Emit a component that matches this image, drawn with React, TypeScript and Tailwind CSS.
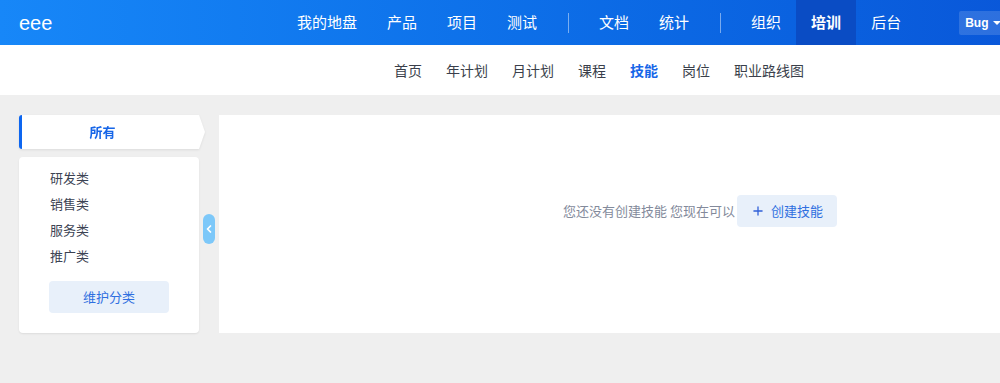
import { ChevronLeft, Plus } from 'lucide-react'

const NAV_LEFT = ['我的地盘', '产品', '项目', '测试']
const NAV_MID = ['文档', '统计']
const NAV_RIGHT = ['组织', '培训', '后台']
const SUB_NAV = ['首页', '年计划', '月计划', '课程', '技能', '岗位', '职业路线图']
const CATEGORIES = ['研发类', '销售类', '服务类', '推广类']

const font = { fontFamily: '"Noto Sans CJK SC", "Noto Sans", sans-serif' }

export default function App() {
  return (
    <div className="w-[1000px] h-[383px] overflow-hidden bg-[#efefef]" style={font}>
      <div className="w-[1180px]">
        {/* 顶部导航 */}
        <header className="h-[45px] flex items-center bg-gradient-to-r from-[#1787f8] to-[#0a4fd4] text-white">
          <div className="w-[282px] shrink-0 pl-[19px] text-[20px] leading-none" style={{ fontFamily: '"Liberation Sans", Arial, sans-serif' }}>
            eee
          </div>
          <nav className="flex items-center h-full text-[15px]">
            {NAV_LEFT.map((n) => (
              <NavItem key={n} label={n} />
            ))}
            <Divider />
            {NAV_MID.map((n) => (
              <NavItem key={n} label={n} />
            ))}
            <Divider />
            {NAV_RIGHT.map((n) => (
              <NavItem key={n} label={n} active={n === '培训'} />
            ))}
          </nav>
          <div
            className="ml-[43px] h-[24px] w-[52px] shrink-0 rounded-[2px] bg-white/15 flex items-center gap-[5px] pl-[6px] text-[12px] font-bold"
            style={{ fontFamily: '"Liberation Sans", Arial, sans-serif' }}
          >
            Bug
            <span className="w-0 h-0 border-x-[4px] border-x-transparent border-t-[4px] border-t-white" />
          </div>
        </header>

        {/* 二级导航 */}
        <div className="h-[50px] bg-white flex items-center pl-[394px] gap-6 text-[14px] text-[#3a3f4b]">
          {SUB_NAV.map((s) => (
            <span key={s} className={s === '技能' ? 'text-[#1766e8] font-bold' : ''}>
              {s}
            </span>
          ))}
        </div>

        {/* 主体 */}
        <div className="relative flex pt-5 pl-[19px] gap-5">
          <aside className="w-[180px] shrink-0 flex flex-col gap-2">
            <div className="relative w-[186px] h-[34px] drop-shadow-[0_1px_1px_rgba(0,0,0,0.08)]">
              <div
                className="h-full bg-white border-l-[3px] border-[#0d66f0] rounded-l-[3px] flex items-center justify-center pr-[22px] text-[13px] font-bold text-[#1766e8]"
                style={{ clipPath: 'polygon(0 0, calc(100% - 6px) 0, 100% 50%, calc(100% - 6px) 100%, 0 100%)' }}
              >
                所有
              </div>
            </div>
            <div className="h-[176px] bg-white rounded-[4px] shadow-[0_1px_2px_rgba(0,0,0,0.08)] pt-[8px] pl-[30px] pr-[30px]">
              {CATEGORIES.map((c) => (
                <div key={c} className="h-[26px] flex items-center pl-px text-[13px] text-[#3c4353]">
                  {c}
                </div>
              ))}
              <button className="mt-[12px] w-[120px] h-[32px] rounded-[4px] bg-[#e8f0fa] text-[13px] text-[#2f6fe0]">
                维护分类
              </button>
            </div>
          </aside>

          {/* 收起按钮 */}
          <div className="absolute left-[203px] top-[119px] w-[12px] h-[30px] rounded-full bg-[#7dc8f9] flex items-center justify-center">
            <ChevronLeft className="w-[12px] h-[12px] text-white shrink-0" strokeWidth={3.5} />
          </div>

          <main className="w-[960px] h-[218px] bg-white flex justify-center pt-[80px]">
            <div className="flex items-start ml-[2px]">
              <span className="h-[31px] flex items-center text-[13px] text-[#838a9b] mr-[2px]">
                您还没有创建技能 您现在可以
              </span>
              <button className="h-[32px] w-[100px] rounded-[4px] bg-[#e8f0fa] flex items-center justify-center gap-[6px] text-[13px] text-[#2f6fe0]">
                <Plus className="w-[14px] h-[14px] text-[#2f5fd8]" strokeWidth={2.2} />
                创建技能
              </button>
            </div>
          </main>
        </div>
      </div>
    </div>
  )
}

function NavItem({ label, active }: { label: string; active?: boolean }) {
  return (
    <div className={'h-full flex items-center px-[15px] ' + (active ? 'bg-[#0a4cc4] font-bold' : '')}>{label}</div>
  )
}

function Divider() {
  return <span className="ml-[16px] mr-[15px] w-px h-[20px] bg-white/45" />
}
